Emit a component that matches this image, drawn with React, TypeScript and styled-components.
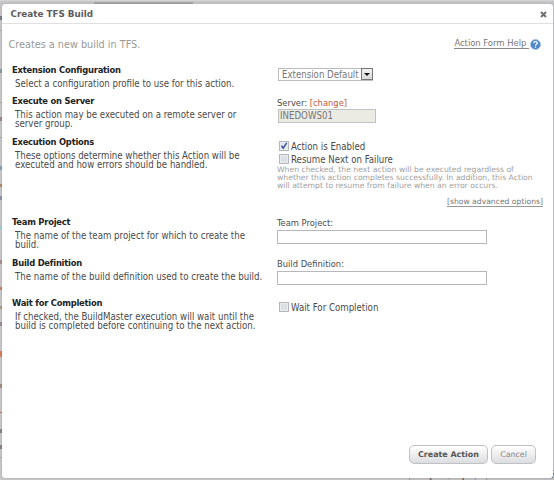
import React from 'react';
import styled, { createGlobalStyle } from 'styled-components';

const GlobalStyle = createGlobalStyle`
  *, *::before { box-sizing: border-box; }
  body {
    margin: 0;
    overflow: hidden;
    background: #c6c6c8;
    color: #4a4a4a;
    font-family: 'DejaVu Sans Condensed', 'DejaVu Sans', sans-serif;
    font-size: 9.6px;
    font-stretch: condensed;
  }
`;

const Screen = styled.div`
  position: relative;
  width: 554px;
  height: 480px;
  padding: 3px 1px 3px 2px;
  overflow: hidden;
  border-top: 1px solid #d4d4d4;
`;

const Backdrop = styled.div`
  position: absolute;
  inset: 0;
`;

const BackdropTab = styled.div`
  position: absolute;
  top: 0;
  left: 94px;
  width: 99px;
  height: 3px;
  border-bottom: 2px solid #a6a6a6;
`;

const BackdropSpeck = styled.i<{ $y: number; $h: number; $color: string }>`
  position: absolute;
  left: 0;
  top: ${(p) => p.$y}px;
  width: 2px;
  height: ${(p) => p.$h}px;
  background: ${(p) => p.$color};
`;

const BackdropButton = styled.div<{ $left: number; $width: number }>`
  position: absolute;
  left: ${(p) => p.$left}px;
  top: 469px;
  width: ${(p) => p.$width}px;
  height: 16px;
  padding-left: 8px;
  border: 1px solid #999;
  background: #c0c0c0;
  color: #666;
  font: bold 8px/10px 'DejaVu Sans', sans-serif;
  font-stretch: normal;
  white-space: nowrap;
`;

const Dialog = styled.section`
  position: relative;
  display: flex;
  flex-direction: column;
  height: 474px;
  background: #fff;
  border-radius: 3px;
  box-shadow: 0 0 2px rgba(0, 0, 0, 0.2);
`;

const Header = styled.header`
  display: flex;
  align-items: center;
  justify-content: space-between;
  height: 20px;
  padding: 0 6px 0 8.5px;
  border-bottom: 1px solid #e0e0e0;
`;

const Title = styled.h1`
  margin: 0;
  color: #5c5c5c;
  font: bold 8.8px/12px 'DejaVu Sans', sans-serif;
  font-stretch: normal;
`;

const CloseIcon = styled.svg`
  width: 7px;
  height: 7px;
  margin-top: 1px;
`;

const Intro = styled.div`
  display: flex;
  justify-content: space-between;
  height: 40px;
  padding: 13px 12px 0 6.5px;
`;

const Summary = styled.p`
  margin: 1px 0 0;
  color: #999;
  font: 9.7px/13px 'DejaVu Sans', sans-serif;
  font-stretch: normal;
`;

const HelpLink = styled.a`
  display: flex;
  align-items: flex-start;
  height: 14px;
  color: #777;
  font-size: 9.35px;
  line-height: 12px;
  white-space: pre;
`;

const HelpText = styled.span`
  height: 12px;
  border-bottom: 1px solid #888;
`;

const HelpIcon = styled.svg`
  width: 11px;
  height: 11px;
  margin: 2px 0 0 1px;
`;

const Row = styled.div<{ $height: number }>`
  display: grid;
  grid-template-columns: 265px 1fr;
  height: ${(p) => p.$height}px;
  padding-left: 10px;
`;

const Name = styled.h2`
  margin: 0;
  color: #222;
  font-size: 9.3px;
  line-height: 12px;
  letter-spacing: -0.22px;
  font-weight: bold;
`;

const Description = styled.p`
  margin: 2.5px 0 0 3px;
  line-height: 9.8px;
  white-space: pre-line;
`;

const Field = styled.div<{ $top: number }>`
  display: flex;
  flex-direction: column;
  align-items: flex-start;
  padding-top: ${(p) => p.$top}px;
`;

const Label = styled.label`
  height: 12px;
  font-size: 9.3px;
  line-height: 12px;
`;

const Change = styled.a`
  color: #c4573c;
`;

const TextBox = styled.input`
  width: 210px;
  height: 14px;
  margin-top: 1px;
  padding: 0;
  border: 1px solid #b8b8bc;
  outline: 0;
  background: #fff;
`;

const ServerBox = styled.div`
  width: 98px;
  height: 14px;
  margin-left: 1px;
  padding-left: 1px;
  border: 1px solid #c0c2c4;
  background: #ebebe4;
  color: #757575;
  line-height: 12px;
`;

const Select = styled.div`
  display: flex;
  justify-content: space-between;
  width: 95px;
  height: 13px;
  margin-left: 1px;
  padding-left: 3px;
  border: 1px solid #b9bcc0;
  color: #777;
  line-height: 11px;
`;

const SelectArrow = styled.span`
  display: grid;
  place-items: center;
  width: 12px;
  height: 12px;
  margin: -1px -1px 0 0;
  border: 1px solid #777;
  background: linear-gradient(#f2f2f2, #d9d9d9);

  &::before {
    content: '';
    border: 3px solid transparent;
    border-top-color: #111;
    border-bottom: 0;
  }
`;

const Check = styled.label`
  display: flex;
  align-items: center;
  gap: 2px;
  height: 13px;
  margin-left: 2px;
`;

const CheckIcon = styled.svg`
  width: 10px;
  height: 10px;
  margin-top: -2px;
`;

const Note = styled.p`
  margin: -0.5px 0 0;
  color: #a0a0a0;
  font: 7.7px/8.3px 'DejaVu Sans', sans-serif;
  font-stretch: normal;
  white-space: pre;
`;

const AdvancedLink = styled.a`
  align-self: flex-end;
  height: 10px;
  margin: 6.5px 10px 0 0;
  border-bottom: 1px solid #999;
  color: #777;
  font: 7.65px/9px 'DejaVu Sans', sans-serif;
  font-stretch: normal;
`;

const Footer = styled.footer`
  display: flex;
  justify-content: flex-end;
  gap: 3px;
  margin-top: auto;
  padding: 0 17px 14px 0;
`;

const Button = styled.button<{ $width: number; $primary?: boolean }>`
  width: ${(p) => p.$width}px;
  height: 19px;
  padding: 0;
  border: 1px solid #bfc1c5;
  border-radius: 5px;
  background: linear-gradient(#fff, #f0f0f1 45%, #dcdde0);
  color: ${(p) => (p.$primary ? '#555' : '#888')};
  font: ${(p) => (p.$primary ? 'bold 7.95px' : '7.9px')} / 17px 'DejaVu Sans', sans-serif;
  font-stretch: normal;
`;

const SPECKS: [number, number, string][] = [
  [15, 4, '#777e8a'], [29, 1, '#aaa'], [68, 4, '#8c98a4'], [101, 1, '#aaa'],
  [116, 4, '#9c8489'], [136, 1, '#aaa'], [165, 4, '#8b9fac'], [183, 3, '#b3876a'],
  [195, 4, '#8d93a5'], [225, 3, '#9cc'], [259, 4, '#a98d95'], [286, 3, '#c87c65'],
  [305, 3, '#ac9b88'], [321, 4, '#9c8995'], [350, 6, '#d27b61'], [383, 4, '#a08d86'],
  [411, 1, '#c07059'], [428, 4, '#858589'], [444, 4, '#8d8285'], [456, 1, '#aaa'],
];

function Checkbox({ label, checked }: { label: string; checked?: boolean }) {
  return (
    <Check>
      <CheckIcon viewBox="0 0 10 10">
        <rect x=".5" y=".5" width="9" height="9" fill="#e9ebee" stroke="#b4b6b9" />
        <rect x="2" y="2" width="6" height="6" fill={checked ? '#e3e9f2' : '#dcdfe3'} />
        {checked && <path d="M2.5 4.8 4.2 7.2 7.7 1.9" fill="none" stroke="#3b4f96" strokeWidth="1.5" />}
      </CheckIcon>
      {label}
    </Check>
  );
}

function Info({ name, children }: { name: string; children: string }) {
  return (
    <div>
      <Name>{name}</Name>
      <Description>{children}</Description>
    </div>
  );
}

export default function App() {
  return (
    <>
      <GlobalStyle />
      <Screen>
        <Backdrop aria-hidden>
          <BackdropTab />
          {SPECKS.map(([y, h, color]) => (
            <BackdropSpeck key={y} $y={y} $h={h} $color={color} />
          ))}
          <BackdropButton $left={409} $width={67}>Import/Export</BackdropButton>
          <BackdropButton $left={486} $width={90}>Create Action</BackdropButton>
        </Backdrop>
        <Dialog>
          <Header>
            <Title>Create TFS Build</Title>
            <CloseIcon viewBox="0 0 7 7">
              <path d="M1 1 6 6M6 1 1 6" stroke="#707070" strokeWidth="2" />
            </CloseIcon>
          </Header>
          <Intro>
            <Summary>Creates a new build in TFS.</Summary>
            <HelpLink>
              <HelpText>{'Action Form Help '}</HelpText>
              <HelpIcon viewBox="0 0 11 11">
                <circle cx="5.5" cy="5.5" r="5" fill="#4d86c6" stroke="#a9c4e2" />
                <path d="M3.7 4.2C3.8 2 7.3 2 7.3 4.2 7.3 5.4 5.5 5.2 5.5 6.8M5.5 7.6V8.8" fill="none" stroke="#fff" strokeWidth="1.3" />
              </HelpIcon>
            </HelpLink>
          </Intro>
          <Row $height={31}>
            <Info name="Extension Configuration">Select a configuration profile to use for this action.</Info>
            <Field $top={4}>
              <Select>
                Extension Default
                <SelectArrow />
              </Select>
            </Field>
          </Row>
          <Row $height={41}>
            <Info name="Execute on Server">{'This action may be executed on a remote server or\nserver group.'}</Info>
            <Field $top={2}>
              <Label>
                Server: <Change>[change]</Change>
              </Label>
              <ServerBox>INEDOWS01</ServerBox>
            </Field>
          </Row>
          <Row $height={80}>
            <Info name="Execution Options">{'These options determine whether this Action will be\nexecuted and how errors should be handled.'}</Info>
            <Field $top={4}>
              <Checkbox label="Action is Enabled" checked />
              <Checkbox label="Resume Next on Failure" />
              <Note>
                {'When checked, the next action will be executed regardless of\nwhether this action completes successfully. In addition, this Action\nwill attempt to resume from failure when an error occurs.'}
              </Note>
              <AdvancedLink>[show advanced options]</AdvancedLink>
            </Field>
          </Row>
          <Row $height={41}>
            <Info name="Team Project">{'The name of the team project for which to create the\nbuild.'}</Info>
            <Field $top={1}>
              <Label>Team Project:</Label>
              <TextBox />
            </Field>
          </Row>
          <Row $height={40}>
            <Info name="Build Definition">The name of the build definition used to create the build.</Info>
            <Field $top={1}>
              <Label>Build Definition:</Label>
              <TextBox />
            </Field>
          </Row>
          <Row $height={40}>
            <Info name="Wait for Completion">{'If checked, the BuildMaster execution will wait until the\nbuild is completed before continuing to the next action.'}</Info>
            <Field $top={4}>
              <Checkbox label="Wait For Completion" />
            </Field>
          </Row>
          <Footer>
            <Button $width={79} $primary>Create Action</Button>
            <Button $width={45}>Cancel</Button>
          </Footer>
        </Dialog>
      </Screen>
    </>
  );
}
